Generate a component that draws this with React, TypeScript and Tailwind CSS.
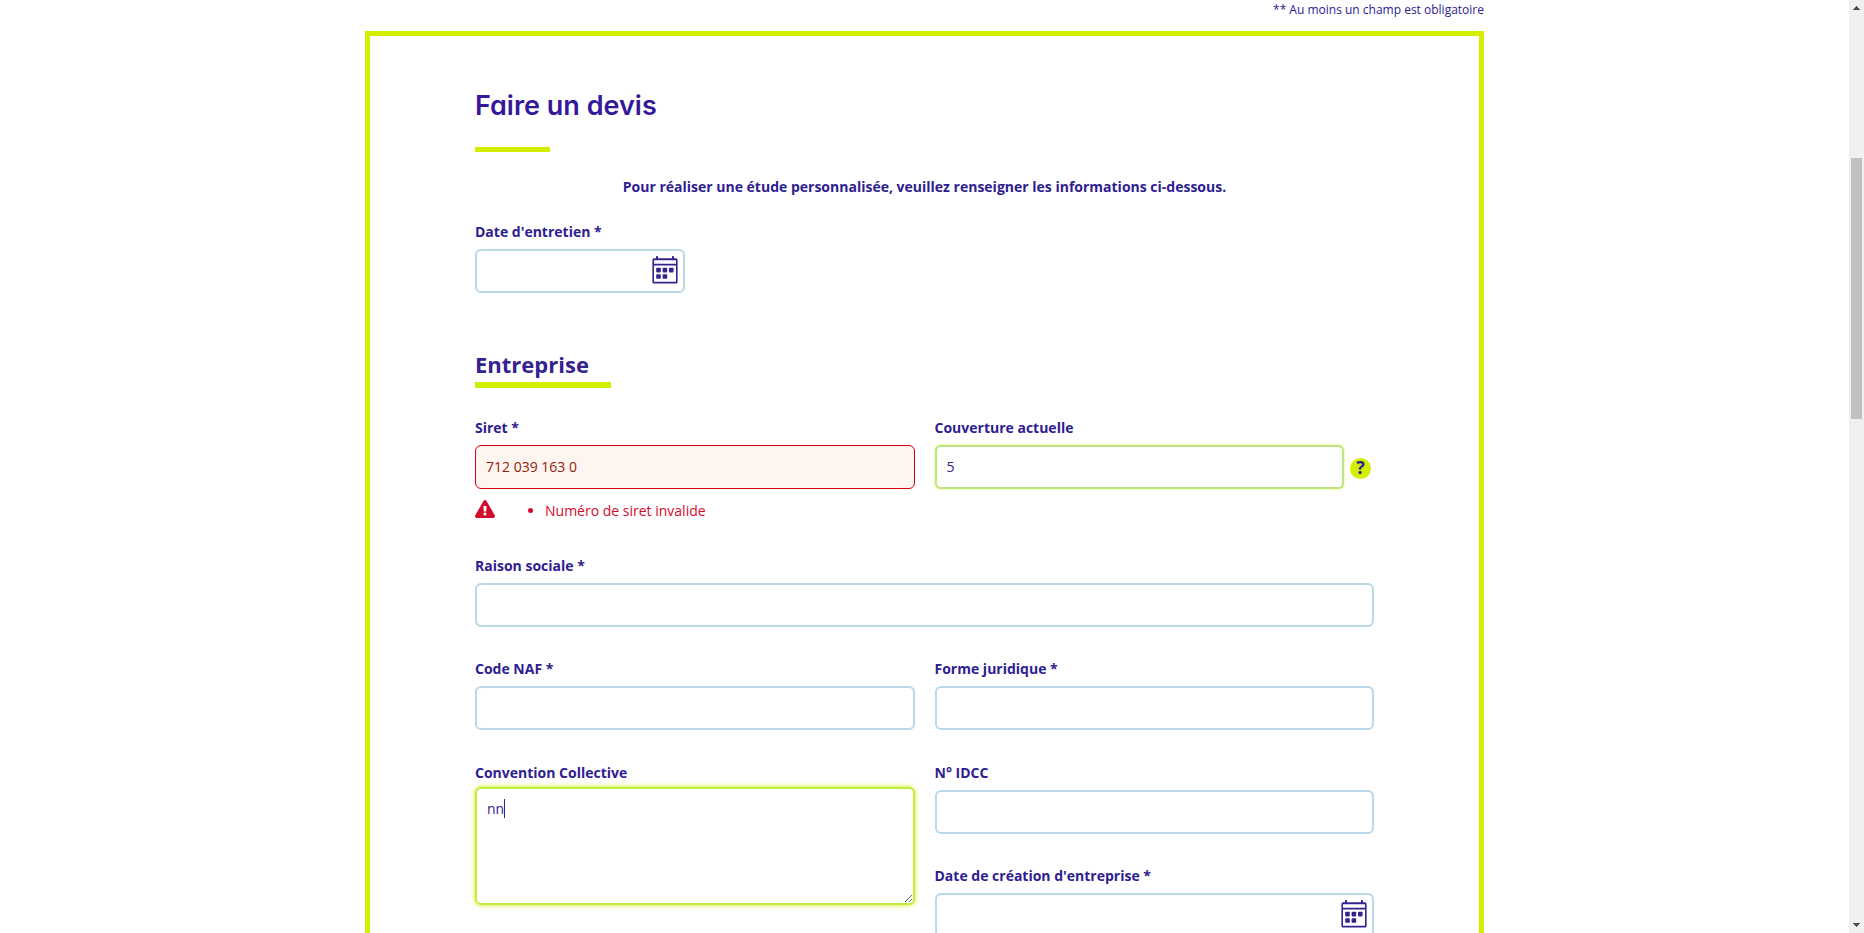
import type { InputHTMLAttributes, ReactNode } from "react";

const INPUT =
  "block h-11 w-full rounded-md border-2 border-[#b9d8e8] bg-white px-2.5 text-sm text-[#35228f] outline-none";

function CalendarIcon() {
  return (
    <svg viewBox="0 0 26 28" className="h-7 w-[26px]" fill="#35228f" aria-hidden="true">
      <path
        fillRule="evenodd"
        d="M2 2.3h2V.7a.7.7 0 0 1 .7-.7h.6a.7.7 0 0 1 .7.7v1.6h14V.7a.7.7 0 0 1 .7-.7h.6a.7.7 0 0 1 .7.7v1.6h2a1.6 1.6 0 0 1 1.6 1.6v22a1.6 1.6 0 0 1-1.6 1.6H2A1.6 1.6 0 0 1 .4 25.9v-22A1.6 1.6 0 0 1 2 2.3Zm0 1.9v3.6h22V4.2Zm0 5.2v16.3h22V9.4Z"
      />
      <rect x="4.2" y="11.8" width="4.6" height="4.6" rx=".8" />
      <rect x="10.6" y="11.8" width="4.6" height="4.6" rx=".8" />
      <rect x="17" y="11.8" width="4.6" height="4.6" rx=".8" />
      <rect x="4.2" y="18.2" width="4.6" height="4.6" rx=".8" />
      <rect x="10.6" y="18.2" width="4.6" height="4.6" rx=".8" />
    </svg>
  );
}

function WarningIcon() {
  return (
    <svg viewBox="0 0 20 18" className="h-[18px] w-5 shrink-0" aria-hidden="true">
      <path
        d="M8.5.9a1.75 1.75 0 0 1 3 0l8.2 14.4a1.75 1.75 0 0 1-1.5 2.7H1.8a1.75 1.75 0 0 1-1.5-2.7Z"
        fill="#d40a2c"
      />
      <path d="M8.4 6h3.2l-.4 5.6H8.8Z" fill="#fff" />
      <circle cx="10" cy="14" r="1.6" fill="#fff" />
    </svg>
  );
}

function Field({ id, label, children }: { id: string; label: string; children: ReactNode }) {
  return (
    <div>
      <label htmlFor={id} className="mb-[5px] block text-sm leading-6 font-bold">
        {label}
      </label>
      {children}
    </div>
  );
}

function TextField({ id, label, ...rest }: { id: string; label: string } & InputHTMLAttributes<HTMLInputElement>) {
  return (
    <Field id={id} label={label}>
      <input id={id} type="text" className={INPUT} {...rest} />
    </Field>
  );
}

function DateField({ id, label }: { id: string; label: string }) {
  return (
    <Field id={id} label={label}>
      <div className="relative">
        <input id={id} type="text" className={INPUT} />
        <button type="button" aria-label="Ouvrir le calendrier" className="absolute top-[7px] right-[7px]">
          <CalendarIcon />
        </button>
      </div>
    </Field>
  );
}

function Scrollbar() {
  return (
    <div className="flex w-[15px] shrink-0 flex-col items-center bg-[#f0f0f0]" aria-hidden="true">
      <svg viewBox="0 0 7 4" className="mt-1.5 h-1 w-[7px]" fill="#505050" shapeRendering="crispEdges">
        <path d="M3 0h1v1h1v1h1v1h1v1H0V3h1V2h1V1h1Z" />
      </svg>
      <div className="flex w-full flex-1 flex-col items-center">
        <div className="flex-[148]" />
        <div className="w-[11px] flex-[261] bg-[#c1c1c1]" />
        <div className="flex-[504]" />
      </div>
      <svg viewBox="0 0 7 4" className="mb-1.5 h-1 w-[7px]" fill="#505050" shapeRendering="crispEdges">
        <path d="M0 0h7v1H6v1H5v1H4v1H3V3H2V2H1V1H0Z" />
      </svg>
    </div>
  );
}

export default function App() {
  return (
    <div className="flex h-screen bg-white font-['Open_Sans',sans-serif] text-[#2e2091]">
      <main className="min-w-0 flex-1 overflow-hidden">
        <div className="mx-auto max-w-[1119px]">
          <p className="mb-3 text-right text-xs leading-[19px]">** Au moins un champ est obligatoire</p>
          <form className="border-[5px] border-[#d4ee00] px-[105px] pt-12 pb-24">
            <h1 className="pt-px font-['Inter',sans-serif] text-[27px] leading-[42px] font-semibold text-[#35189a] [font-feature-settings:'cv11']">
              Faire un devis
            </h1>
            <div className="mt-5 h-[5px] w-[75px] bg-[#d4ee00]" />
            <p className="mt-[23px] text-center text-sm leading-6 font-bold">
              Pour réaliser une étude personnalisée, veuillez renseigner les informations ci-dessous.
            </p>
            <div className="mt-[21px] w-[210px]">
              <DateField id="entretien" label="Date d'entretien *" />
            </div>

            <h2 className="mt-[55px] mb-px text-[22px] leading-[33px] font-bold text-[#35228f]">Entreprise</h2>
            <div className="h-1.5 w-[136px] bg-[#d4ee00]" />

            <div className="mt-7 grid grid-cols-2 gap-x-5">
              <div>
                <Field id="siret" label="Siret *">
                  <input
                    id="siret"
                    type="text"
                    defaultValue="712 039 163 0"
                    aria-invalid="true"
                    aria-describedby="siret-error"
                    className="block h-11 w-full rounded-md border border-[#d8000c] bg-[#fff5f0] px-2.5 pb-0.5 text-sm text-[#94210a] outline-none"
                  />
                </Field>
                <div id="siret-error" className="mt-[11px] flex items-start text-[#d40a2c]">
                  <WarningIcon />
                  <ul className="-mt-px ml-[50px] list-disc text-sm leading-6">
                    <li>Numéro de siret invalide</li>
                  </ul>
                </div>
              </div>
              <Field id="couverture" label="Couverture actuelle">
                <div className="flex items-center gap-1.5">
                  <input
                    id="couverture"
                    type="text"
                    defaultValue="5"
                    className="block h-11 min-w-0 flex-1 rounded-md border-2 border-[#bde584] bg-white px-2.5 pb-0.5 text-sm text-[#35228f] shadow-[0_0_2px_#d4ee00] outline-none"
                  />
                  <button
                    type="button"
                    aria-label="Aide"
                    className="mt-[3px] mr-[3px] flex size-[21px] items-center justify-center rounded-full bg-[#d4ee00] pb-[3px] text-lg leading-4 font-bold"
                  >
                    ?
                  </button>
                </div>
              </Field>
            </div>

            <div className="mt-[31px]">
              <TextField id="raison" label="Raison sociale *" />
            </div>
            <div className="mt-[30px] grid grid-cols-2 gap-x-5">
              <TextField id="naf" label="Code NAF *" />
              <TextField id="forme" label="Forme juridique *" />
            </div>
            <div className="mt-[31px] grid grid-cols-2 gap-x-5">
              <div>
                <label htmlFor="convention" className="mb-0.5 block text-sm leading-6 font-bold">
                  Convention Collective
                </label>
                <div className="relative">
                  <textarea
                    id="convention"
                    defaultValue="nn"
                    className="block h-[118px] w-full resize rounded-md border-2 border-[#c0ec44] bg-white px-2.5 py-2.5 text-sm leading-5 text-[#35228f] shadow-[0_0_5px_#d4ee00] outline-none"
                  />
                  <span className="absolute top-3 left-[29px] h-[19px] w-px bg-[#35228f]" aria-hidden="true" />
                </div>
              </div>
              <div className="flex flex-col gap-[30px]">
                <TextField id="idcc" label="N° IDCC" />
                <DateField id="creation" label="Date de création d'entreprise *" />
              </div>
            </div>
          </form>
        </div>
      </main>
      <Scrollbar />
    </div>
  );
}
